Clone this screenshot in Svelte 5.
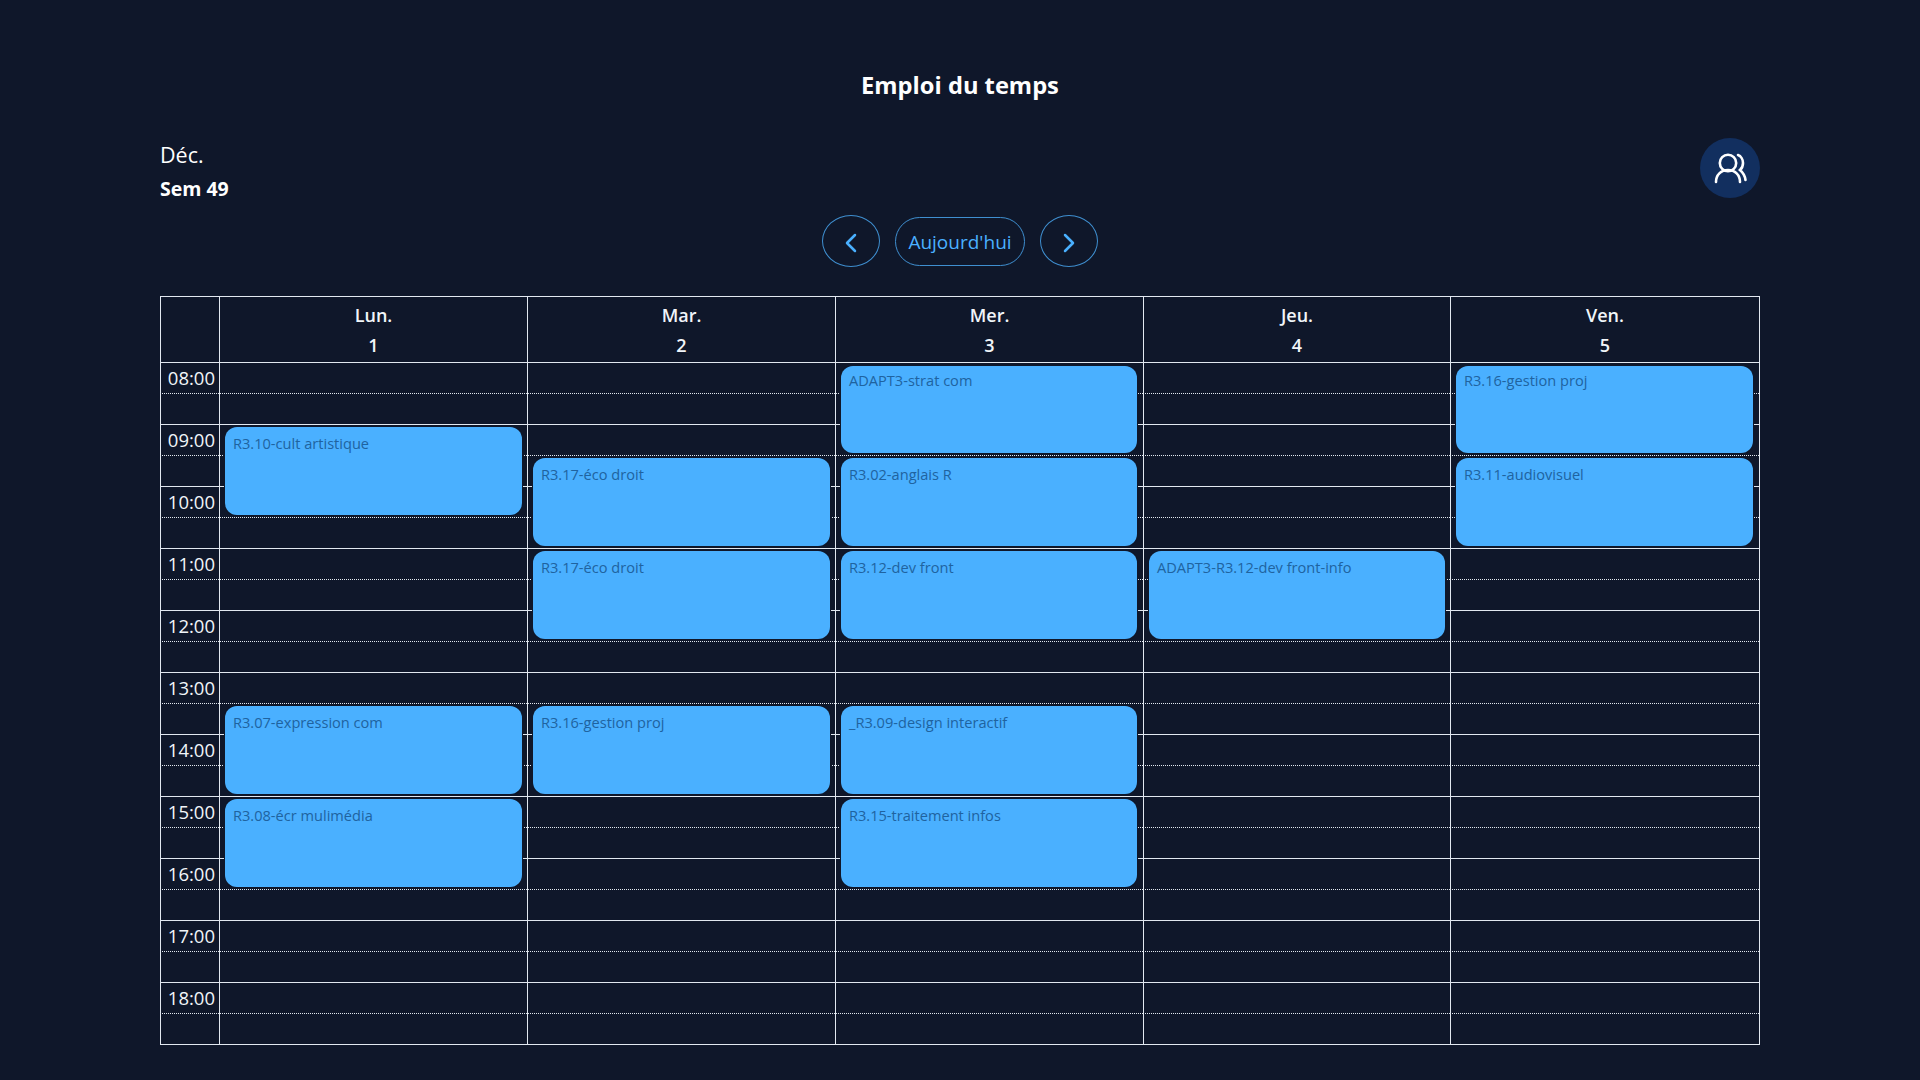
<script>
  const days = [
    { name: 'Lun.', num: 1, events: [
      { start: 2, label: 'R3.10-cult artistique' },
      { start: 11, label: 'R3.07-expression com' },
      { start: 14, label: 'R3.08-écr mulimédia' },
    ] },
    { name: 'Mar.', num: 2, events: [
      { start: 3, label: 'R3.17-éco droit' },
      { start: 6, label: 'R3.17-éco droit' },
      { start: 11, label: 'R3.16-gestion proj' },
    ] },
    { name: 'Mer.', num: 3, tight: true, events: [
      { start: 0, label: 'ADAPT3-strat com' },
      { start: 3, label: 'R3.02-anglais R' },
      { start: 6, label: 'R3.12-dev front' },
      { start: 11, label: '_R3.09-design interactif' },
      { start: 14, label: 'R3.15-traitement infos' },
    ] },
    { name: 'Jeu.', num: 4, events: [
      { start: 6, label: 'ADAPT3-R3.12-dev front-info' },
    ] },
    { name: 'Ven.', num: 5, tight: true, events: [
      { start: 0, label: 'R3.16-gestion proj' },
      { start: 3, label: 'R3.11-audiovisuel' },
    ] },
  ]

  const hours = ['08:00', '09:00', '10:00', '11:00', '12:00', '13:00', '14:00', '15:00', '16:00', '17:00', '18:00']
  const slots = Array.from({ length: 22 }, (_, i) => i)
</script>

<main>
  <h1>Emploi du temps</h1>

  <div class="top">
    <div class="period">
      <div class="month">Déc.</div>
      <div class="week">Sem 49</div>
    </div>
    <button class="avatar" aria-label="Utilisateurs">
      <svg width="36" height="36" viewBox="0 0 36 36" fill="none" stroke="#fff" stroke-width="2.6" stroke-linecap="round">
        <circle cx="16" cy="13" r="8.2" />
        <path d="M4 32c0-7 5-12 12-12s12 5 12 12" />
        <path d="M26 5c3 1 5 4.500 5 8 0 3-1.200 5.500-3 7 2.800 2.400 5 6 5.500 10" />
      </svg>
    </button>
  </div>

  <nav class="nav">
    <button class="round" aria-label="Semaine précédente">
      <svg width="14" height="20" viewBox="0 0 14 20" fill="none" stroke="#4ab0ff" stroke-width="2.5" stroke-linecap="round" stroke-linejoin="round">
        <path d="M11 2 3 10l8 8" />
      </svg>
    </button>
    <button class="today">Aujourd'hui</button>
    <button class="round" aria-label="Semaine suivante">
      <svg width="14" height="20" viewBox="0 0 14 20" fill="none" stroke="#4ab0ff" stroke-width="2.5" stroke-linecap="round" stroke-linejoin="round">
        <path d="m3 2 8 8-8 8" />
      </svg>
    </button>
  </nav>

  <div class="calendar">
    <div class="head corner"></div>
    {#each days as day, d}
      <div class="head" style="grid-column: {d + 2}">
        <span>{day.name}</span>
        <span>{day.num}</span>
      </div>
    {/each}

    {#each slots as s}
      <div class="cell" class:half={s % 2 === 1} style="grid-row: {s + 2}; grid-column: 1">
        {#if s % 2 === 0}<span class="hour">{hours[s / 2]}</span>{/if}
      </div>
      {#each days as day, d}
        <div class="cell" class:half={s % 2 === 1} style="grid-row: {s + 2}; grid-column: {d + 2}"></div>
      {/each}
    {/each}

    {#each days as day, d}
      {#each day.events as ev}
        <div class="event" class:first={ev.start === 0} class:tight={day.tight} style="grid-row: {ev.start + 2} / span 3; grid-column: {d + 2}">{ev.label}</div>
      {/each}
    {/each}
  </div>
</main>

<style>
  :global(body) {
    background: #0f172a;
  }

  main {
    box-sizing: border-box;
    height: 1080px;
    padding: 68px 160px 0;
    color: #fff;
    font-family: "Open Sans", "Noto Sans", sans-serif;
    overflow: hidden;
  }

  h1 {
    margin: 0;
    font-size: 23.7px;
    line-height: 34px;
    font-weight: 700;
    text-align: center;
  }

  /* Top */
  .top {
    display: flex;
    justify-content: space-between;
    align-items: flex-start;
    margin-top: 36px;
  }
  .month {
    font-size: 21.5px;
    line-height: 30px;
    margin-top: 2px;
  }
  .week {
    margin-top: 7px;
    font-size: 19.5px;
    line-height: 24px;
    font-weight: 700;
  }
  .avatar {
    display: flex;
    align-items: center;
    justify-content: center;
    width: 60px;
    height: 60px;
    padding: 0;
    border: none;
    border-radius: 50%;
    background: #122f5f;
  }

  /* Nav */
  .nav {
    display: flex;
    justify-content: center;
    align-items: center;
    gap: 15px;
    margin-top: 14px;
  }
  button {
    font-family: inherit;
  }
  .round {
    box-sizing: border-box;
    display: flex;
    align-items: center;
    justify-content: center;
    width: 58px;
    height: 52px;
    padding: 4px 0 0;
    background: none;
    border: 1px solid #3f8fd0;
    border-radius: 50%;
  }
  .today {
    box-sizing: border-box;
    width: 130px;
    height: 49px;
    padding: 2px 0 0;
    background: none;
    color: #4ab0ff;
    font-size: 19px;
    border: 1px solid #3f8fd0;
    border-radius: 25px;
  }

  /* Calendar */
  .calendar {
    box-sizing: border-box;
    display: grid;
    grid-template-columns: 59px 308px 308px 308px 307px 309px;
    grid-template-rows: 66px repeat(22, 31px);
    width: 1600px;
    margin-top: 29px;
    border-right: 1px solid #e2e8f0;
    border-bottom: 1px solid #e2e8f0;
  }
  .head {
    display: flex;
    flex-direction: column;
    align-items: center;
    justify-content: center;
    grid-row: 1;
    border-left: 1px solid #e2e8f0;
    border-top: 1px solid #e2e8f0;
    font-size: 18px;
    line-height: 30px;
    font-weight: 600;
    color: #f1f5f9;
  }
  .corner {
    grid-column: 1;
  }
  .cell {
    box-sizing: border-box;
    border-left: 1px solid #e2e8f0;
    border-top: 1px solid #e2e8f0;
    min-width: 0;
  }
  .cell.half {
    border-top: 1px dotted #e2e8f0;
  }
  .hour {
    display: block;
    padding-right: 4px;
    text-align: right;
    font-size: 18.5px;
    line-height: 30px;
    color: #f1f5f9;
  }
  .event {
    margin: 3px 5px 0 6px;
    height: 88px;
    padding: 4px 8px;
    box-sizing: border-box;
    border-radius: 12px;
    background: #4ab0ff;
    box-shadow: 0 0 0 1px #0f172a;
    color: #1f63a0;
    font-size: 14.6px;
    line-height: 24px;
    white-space: nowrap;
    overflow: hidden;
  }
  .event.tight {
    margin-right: 6px;
  }
  .event.first {
    margin-top: 4px;
    height: 87px;
    padding-top: 2px;
  }
</style>
